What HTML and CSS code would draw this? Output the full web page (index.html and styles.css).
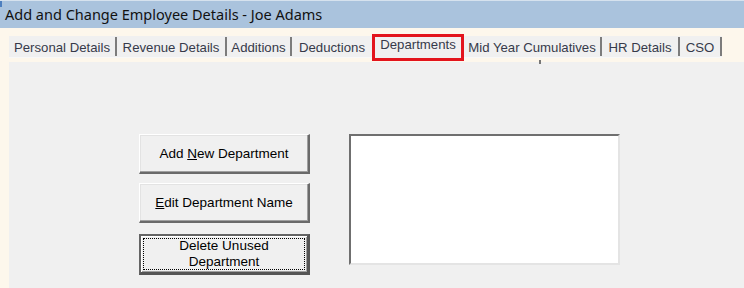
FILE: index.html
```html
<!DOCTYPE html>
<html>
<head>
<meta charset="utf-8">
<link rel="stylesheet" href="styles.css">
</head>
<body>
<div class="window">
  <div class="titlebar"><span class="corner"></span><span class="title">Add and Change Employee Details - Joe Adams</span></div>
  <div class="client">
    <div class="tabs">
      <div class="tab t1">Personal Details</div>
      <div class="tab t2">Revenue Details</div>
      <div class="tab t3">Additions</div>
      <div class="tab t4">Deductions</div>
      <div class="tab selected">Departments</div>
      <div class="tab t6">Mid Year Cumulatives</div>
      <div class="tab t7">HR Details</div>
      <div class="tab t8">CSO</div>
    </div>
    <div class="gap"><span class="tick"></span></div>
    <div class="page">
      <div class="buttons">
        <button class="btn btn-add"><span class="label">Add <u>N</u>ew Department</span></button>
        <button class="btn btn-edit"><span class="label"><u>E</u>dit Department Name</span></button>
        <button class="btn btn-delete default"><span class="focus"><span class="label">Delete Unused<br>Department</span></span></button>
      </div>
      <div class="listbox"></div>
    </div>
  </div>
</div>
</body>
</html>
```

FILE: styles.css
```css
html, body {
  margin: 0;
  padding: 0;
  background: #f0f0f0;
}
.window {
  width: 744px;
  height: 288px;
  overflow: hidden;
  display: flex;
  flex-direction: column;
}
.titlebar {
  height: 28px;
  box-sizing: border-box;
  background: #aac3dd;
  border-top: 1px solid #d6e2ee;
  display: flex;
  align-items: center;
  position: relative;
}
.corner {
  position: absolute;
  left: 0;
  top: 0;
  width: 2px;
  height: 6px;
  background: #4d7fbf;
}
.title {
  font-family: "Noto Sans", "Open Sans", sans-serif;
  font-size: 14.5px;
  color: #111;
  padding-left: 5px;
  padding-bottom: 1px;
}
.client {
  flex: 1;
  background: #fdf7ec;
  display: flex;
  flex-direction: column;
  padding-top: 8px;
}
.tabs {
  margin-left: 9px;
  height: 21px;
  display: flex;
  align-items: stretch;
  width: 713px;
  background: #f0f0f0;
  border-bottom: 1px solid #f8f8f8;
}
.tab {
  font-family: "Liberation Sans", Arial, sans-serif;
  font-size: 13.2px;
  color: #363a4a;
  background: #f0f0f0;
  display: flex;
  align-items: center;
  justify-content: center;
  box-sizing: border-box;
  padding-top: 1px;
  border-right: 2px solid #7c7c7c;
  margin: 1px 0;
  white-space: nowrap;
  flex: none;
}
.t1 { width: 108px; }
.t2 { width: 110px; }
.t3 { width: 65px; }
.t4 { width: 80px; border-right: none; }
.tab.selected {
  width: 92px;
  border: 3px solid #e3141c;
  margin: -2px 0 -4px 0;
  padding: 0 0 6px 0;
  height: 27px;
}
.t6 { width: 138px; }
.t7 { width: 78px; }
.t8 { width: 42px; }
.gap {
  height: 4px;
  position: relative;
}
.tick {
  position: absolute;
  left: 539px;
  top: 2px;
  width: 2px;
  height: 4px;
  background: #777;
}
.page {
  flex: 1;
  margin-left: 9px;
  background: #f0f0f0;
  display: flex;
  align-items: flex-start;
  padding-top: 72px;
  padding-left: 130px;
}
.buttons {
  display: flex;
  flex-direction: column;
  width: 171px;
}
.btn {
  font-family: "Liberation Sans", Arial, sans-serif;
  font-size: 13.5px;
  color: #000;
  background: #f0f0f0;
  width: 171px;
  height: 40px;
  box-sizing: border-box;
  border-style: solid;
  border-width: 1px 2px 2px 1px;
  border-color: #ffffff #6a6a6a #6a6a6a #ffffff;
  box-shadow: inset -1px -1px 0 #a0a0a0, inset 1px 1px 0 #e3e3e3;
  padding: 0;
  margin: 0;
  display: flex;
  align-items: center;
  justify-content: center;
  line-height: 16px;
}
.label {
  display: block;
  text-align: center;
  white-space: nowrap;
}
.btn-edit { margin-top: 9px; }
.btn-delete {
  margin-top: 11px;
  height: 41px;
  border-width: 2px 3px 3px 2px;
  border-color: #646464 #555 #555 #646464;
  box-shadow: inset 1px 1px 0 #fff, inset -1px -1px 0 #a0a0a0;
  padding: 2px;
}
.focus {
  flex: 1;
  align-self: stretch;
  border: 1px dotted #000;
  display: flex;
  align-items: center;
  justify-content: center;
}
.listbox {
  margin-left: 39px;
  width: 271px;
  height: 131px;
  box-sizing: border-box;
  background: #fff;
  border-style: solid;
  border-width: 2px 2px 2px 2px;
  border-color: #6f6f6f #e4e4e4 #e4e4e4 #6f6f6f;
}
```
